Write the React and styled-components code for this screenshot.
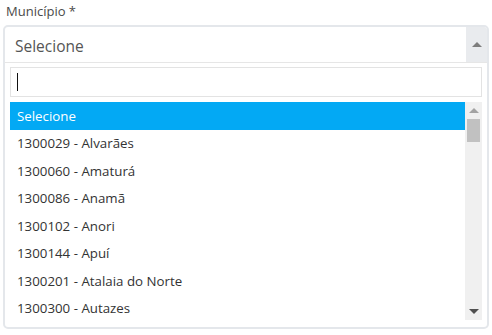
import React from "react";
import styled, { createGlobalStyle } from "styled-components";

const GlobalStyle = createGlobalStyle`
  html, body {
    margin: 0;
    padding: 0;
    background: #fff;
    font-family: "Open Sans", "Noto Sans", sans-serif;
  }
`;

const options = [
  "Selecione",
  "1300029 - Alvarães",
  "1300060 - Amaturá",
  "1300086 - Anamã",
  "1300102 - Anori",
  "1300144 - Apuí",
  "1300201 - Atalaia do Norte",
  "1300300 - Autazes",
];

const Page = styled.div`
  width: 492px;
  height: 335px;
  overflow: hidden;
  padding: 3px 0 0 3px;
  box-sizing: border-box;
`;

const Label = styled.label`
  display: block;
  font-size: 13px;
  line-height: 17px;
  color: #4a4a4a;
  margin-left: 3px;
  margin-bottom: 5px;
`;

const Combo = styled.div`
  width: 486px;
  height: 304px;
  box-sizing: border-box;
  border: 2px solid #e4e7eb;
  border-radius: 5px;
  display: flex;
  flex-direction: column;
  overflow: hidden;
  background: #fff;
`;

const Header = styled.div`
  display: flex;
  height: 35px;
  flex-shrink: 0;
  border-bottom: 1px solid #e6e6e6;
`;

const Value = styled.div`
  flex: 1;
  font-size: 15.5px;
  color: #555;
  padding: 3px 0 0 10px;
  display: flex;
  align-items: center;
`;

const ArrowBox = styled.div`
  width: 21px;
  background: #e9ebee;
  display: flex;
  align-items: center;
  justify-content: center;
`;

const Tri = styled.span`
  width: 0;
  height: 0;
  border-left: 5px solid transparent;
  border-right: 5px solid transparent;
  ${(p) => (p.$down ? "border-top" : "border-bottom")}: 5px solid ${(p) => p.$color || "#888"};
`;

const Body = styled.div`
  flex: 1;
  padding: 4px 5px 0 5px;
  display: flex;
  flex-direction: column;
  gap: 5px;
`;

const Search = styled.div`
  height: 30px;
  box-sizing: border-box;
  border: 1px solid #e3e3e3;
  display: flex;
  align-items: center;
  padding-left: 6px;
`;

const Caret = styled.span`
  width: 1px;
  height: 18px;
  background: #111;
`;

const ListWrap = styled.div`
  height: 218px;
  display: flex;
  overflow: hidden;
`;

const List = styled.ul`
  flex: 1;
  list-style: none;
  margin: 0;
  padding: 0;
`;

const Option = styled.li`
  height: 27.5px;
  display: flex;
  align-items: center;
  padding-left: 7px;
  font-size: 13.3px;
  color: ${(p) => (p.$active ? "#fff" : "#333")};
  background: ${(p) => (p.$active ? "#03a9f4" : "transparent")};
`;

const Scrollbar = styled.div`
  width: 17px;
  background: #f0f0f0;
  display: flex;
  flex-direction: column;
  align-items: center;
`;

const ScrollBtn = styled.div`
  height: 17px;
  display: flex;
  align-items: center;
  justify-content: center;
`;

const Thumb = styled.div`
  width: 13px;
  height: 23px;
  background: #c1c1c1;
`;

const Track = styled.div`
  flex: 1;
`;

export default function App() {
  return (
    <Page>
      <GlobalStyle />
      <Label>Município *</Label>
      <Combo>
        <Header>
          <Value>Selecione</Value>
          <ArrowBox>
            <Tri $color="#7d7d7d" />
          </ArrowBox>
        </Header>
        <Body>
          <Search>
            <Caret />
          </Search>
          <ListWrap>
            <List>
              {options.map((o, i) => (
                <Option key={o} $active={i === 0}>
                  {o}
                </Option>
              ))}
            </List>
            <Scrollbar>
              <ScrollBtn>
                <Tri $color="#a3a3a3" />
              </ScrollBtn>
              <Thumb />
              <Track />
              <ScrollBtn>
                <Tri $down $color="#505050" />
              </ScrollBtn>
            </Scrollbar>
          </ListWrap>
        </Body>
      </Combo>
    </Page>
  );
}
